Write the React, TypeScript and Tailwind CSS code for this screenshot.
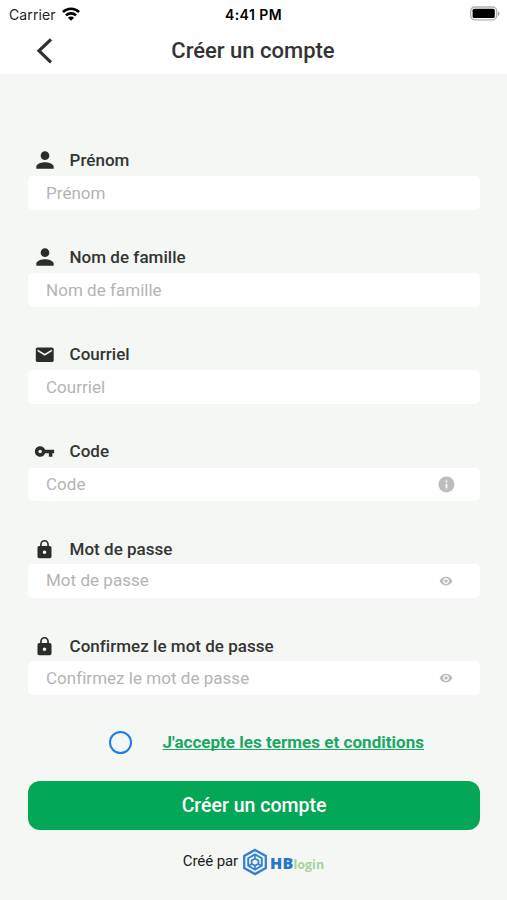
import { MdEmail, MdInfo, MdLock, MdPerson, MdRemoveRedEye, MdVpnKey } from 'react-icons/md'
import type { IconType } from 'react-icons'

interface Field {
  id: string
  label: string
  icon: IconType
  iconSize: number
  trailing?: 'info' | 'eye'
}

const fields: Field[] = [
  { id: 'firstName', label: 'Prénom', icon: MdPerson, iconSize: 26 },
  { id: 'lastName', label: 'Nom de famille', icon: MdPerson, iconSize: 26 },
  { id: 'email', label: 'Courriel', icon: MdEmail, iconSize: 21.5 },
  { id: 'code', label: 'Code', icon: MdVpnKey, iconSize: 21, trailing: 'info' },
  { id: 'password', label: 'Mot de passe', icon: MdLock, iconSize: 21, trailing: 'eye' },
  { id: 'confirm', label: 'Confirmez le mot de passe', icon: MdLock, iconSize: 21, trailing: 'eye' },
]

function StatusBar() {
  return (
    <div className="grid h-7 grid-cols-3 items-center pl-[9px] pr-[7px] text-black">
      <div className="flex items-center gap-[6px]">
        <span className="font-['Inter',sans-serif] text-[14px] tracking-[0.1px] text-[#222]">Carrier</span>
        <svg width="18" height="14" viewBox="0 0 18 14" fill="none" stroke="black" strokeWidth="2.6" className="-mt-px">
          <path d="M.9 5C5.5.7 12.5.7 17.1 5" />
          <path d="M3.9 8.4c2.9-2.7 7.3-2.7 10.2 0" />
          <path d="M9 13.8 5.9 10.7c1.6-1.5 4.6-1.5 6.2 0Z" fill="black" stroke="none" />
        </svg>
      </div>
      <span className="-ml-[2px] text-center font-['Inter',sans-serif] text-[14px] font-semibold tracking-[0.45px]">
        4:41 PM
      </span>
      <svg className="justify-self-end" width="31" height="16" viewBox="0 0 31 16">
        <rect x="1.7" y="1" width="26" height="12.8" rx="4" fill="white" stroke="#b0b0b0" strokeWidth="1.3" />
        <rect x="3.6" y="2.8" width="22.2" height="9.2" rx="1.5" fill="black" />
        <path d="M29 5.2c2 .8 2 3.8 0 4.6Z" fill="#a8a8a8" />
      </svg>
    </div>
  )
}

function Header() {
  return (
    <header className="relative flex h-[46px] items-center justify-center">
      <button type="button" aria-label="Retour" className="absolute left-[35px] top-[9px]">
        <svg width="20" height="28" viewBox="0 0 20 28" fill="none" stroke="#303030" strokeWidth="3.2">
          <path d="M16 2.3 4 13.8l12 11.5" />
        </svg>
      </button>
      <h1 className="-ml-px text-[22px] font-medium leading-none text-[#333]">Créer un compte</h1>
    </header>
  )
}

function FormField({ field }: { field: Field }) {
  const Icon = field.icon
  const isPassword = field.trailing === 'eye'
  return (
    <div className="h-[97.2px]">
      <label
        htmlFor={field.id}
        className={`flex items-center ${isPassword ? 'h-[31.2px] pt-[2.6px]' : 'h-8 pt-[1.2px]'}`}
      >
        <span className="-mt-px flex w-[34px] justify-center">
          <Icon size={field.iconSize} color="#2b2d2b" className="-ml-px shrink-0" />
        </span>
        <span className="ml-[7.5px] text-[17px] font-medium tracking-[0.03px] text-[#333533]">{field.label}</span>
      </label>
      <div className="flex h-[33.6px] items-center rounded-[5px] bg-white pl-[18px] pr-[23px]">
        <input
          id={field.id}
          type={isPassword ? 'password' : 'text'}
          placeholder={field.label}
          className="min-w-0 flex-1 bg-transparent pt-px text-[17px] tracking-[0.03px] outline-none placeholder:text-[#b4b4b4]"
        />
        <span className="flex w-[22px] justify-center text-[#bdbdbd]">
          {field.trailing === 'info' && <MdInfo size={19} />}
          {field.trailing === 'eye' && <MdRemoveRedEye size={14} />}
        </span>
      </div>
    </div>
  )
}

function Logo() {
  return (
    <div className="flex items-center">
      <svg width="26" height="28" viewBox="0 0 26 28" fill="none" stroke="#3380d0">
        <path d="M13 1.9 23.8 8v12L13 26.1 2.2 20V8Z" strokeWidth="2.3" />
        <path d="m13 6.4 6.8 3.8v7.6L13 21.6l-6.8-3.8v-7.6Z" strokeWidth="1.9" />
        <path d="M13 11V6.4M15.6 16l4.2 1.8M10.4 16l-4.2 1.8M13 21.6V17" strokeWidth="1.5" />
        <path d="m13 10.8 3.4 1.8v3.2L13 17.8l-3.4-2v-3.2Z" strokeWidth="1.7" />
      </svg>
      <span className="ml-[2px] flex items-baseline pt-[2px] font-['Open_Sans',sans-serif] leading-none">
        <span className="text-[16px] font-extrabold tracking-[0.2px] text-[#2777cb]">HB</span>
        <span className="text-[12.5px] font-bold text-[#a3d49a]">login</span>
      </span>
    </div>
  )
}

export default function App() {
  return (
    <div className="h-[900px] w-[507px] overflow-hidden bg-[#f5f7f5] font-['Roboto',sans-serif]">
      <div className="bg-white">
        <StatusBar />
        <Header />
      </div>

      <form className="pl-[28px] pr-[27px] pt-[70px]">
        {fields.map((field) => (
          <FormField key={field.id} field={field} />
        ))}

        {/* Terms */}
        <div className="mt-[3px] flex h-6 items-center">
          <span className="ml-[81px] size-[23px] rounded-full border-[2.5px] border-[#1a7cf0]" />
          <a
            href="#"
            className="ml-[30.5px] pt-px text-[17px] font-bold tracking-[0.03px] text-[#1aa863] underline [text-decoration-skip-ink:none]"
          >
            J'accepte les termes et conditions
          </a>
        </div>

        <button
          type="button"
          className="mt-[26.4px] block h-[49px] w-full rounded-[12px] bg-[#03a756] pt-px text-[19.5px] font-medium text-white"
        >
          Créer un compte
        </button>
      </form>

      <footer className="mt-[18.6px] flex items-center justify-center gap-[4px]">
        <span className="-mt-px text-[15px] tracking-[-0.1px] text-[#1c1c1c]">Créé par</span>
        <Logo />
      </footer>
    </div>
  )
}
